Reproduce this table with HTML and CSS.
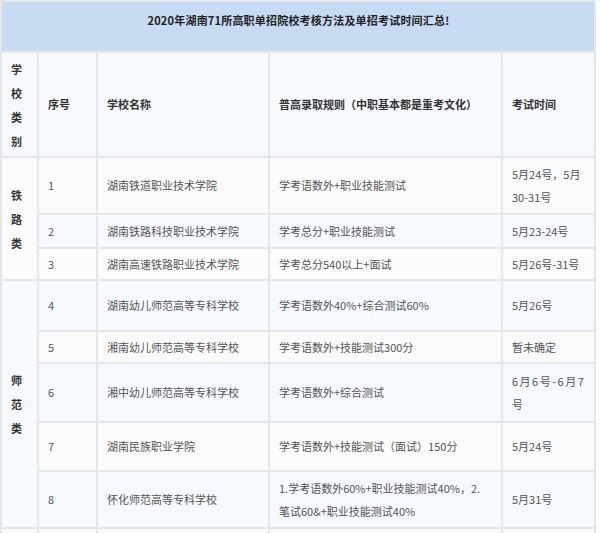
FILE: index.html
```html
<!DOCTYPE html>
<html lang="zh-CN">
<head>
<meta charset="utf-8">
<title>2020年湖南71所高职单招院校考核方法及单招考试时间汇总</title>
<link rel="stylesheet" href="styles.css">
</head>
<body>
<table class="sheet">
  <colgroup>
    <col class="c-cat">
    <col class="c-no">
    <col class="c-name">
    <col class="c-rule">
    <col class="c-date">
  </colgroup>
  <tr class="r-title">
    <td class="title" colspan="5">2020年湖南71所高职单招院校考核方法及单招考试时间汇总!</td>
  </tr>
  <tr class="r-head blue">
    <td class="cat">学校类别</td>
    <td class="head">序号</td>
    <td class="head">学校名称</td>
    <td class="head">普高录取规则（中职基本都是重考文化）</td>
    <td class="head">考试时间</td>
  </tr>
  <tr class="r1 white">
    <td class="cat" rowspan="3">铁路类</td>
    <td>1</td>
    <td>湖南铁道职业技术学院</td>
    <td>学考语数外+职业技能测试</td>
    <td>5月24号，5月<br>30-31号</td>
  </tr>
  <tr class="r2 blue">
    <td>2</td>
    <td>湖南铁路科技职业技术学院</td>
    <td>学考总分+职业技能测试</td>
    <td>5月23-24号</td>
  </tr>
  <tr class="r3 white">
    <td>3</td>
    <td>湖南高速铁路职业技术学院</td>
    <td>学考总分540以上+面试</td>
    <td>5月26号-31号</td>
  </tr>
  <tr class="r4 blue">
    <td class="cat" rowspan="5">师范类</td>
    <td>4</td>
    <td>湖南幼儿师范高等专科学校</td>
    <td>学考语数外40%+综合测试60%</td>
    <td>5月26号</td>
  </tr>
  <tr class="r5 white">
    <td>5</td>
    <td>湘南幼儿师范高等专科学校</td>
    <td>学考语数外+技能测试300分</td>
    <td>暂未确定</td>
  </tr>
  <tr class="r6 blue">
    <td>6</td>
    <td>湘中幼儿师范高等专科学校</td>
    <td>学考语数外+综合测试</td>
    <td class="spaced">6月6号-6月7<br>号</td>
  </tr>
  <tr class="r7 white">
    <td>7</td>
    <td>湖南民族职业学院</td>
    <td>学考语数外+技能测试（面试）150分</td>
    <td>5月24号</td>
  </tr>
  <tr class="r8 blue">
    <td>8</td>
    <td>怀化师范高等专科学校</td>
    <td>1.学考语数外60%+职业技能测试40%，2.<br>笔试60&amp;+职业技能测试40%</td>
    <td>5月31号</td>
  </tr>
  <tr class="r9 white">
    <td class="cat"></td>
    <td></td>
    <td></td>
    <td></td>
    <td></td>
  </tr>
</table>
</body>
</html>
```

FILE: styles.css
```css
html, body {
  margin: 0;
  padding: 0;
  background: #ffffff;
}

body {
  font-family: "Noto Sans CJK SC", "Noto Sans", sans-serif;
  font-size: 11px;
  color: #555555;
}

.sheet {
  width: 595px;
  table-layout: fixed;
  border-collapse: collapse;
}

.c-cat { width: 37px; }
.c-no { width: 59px; }
.c-name { width: 172px; }
.c-rule { width: 233px; }
.c-date { width: 93px; }

.sheet td {
  border: 2px solid #e4e6e9;
  padding: 0 8px 0 9px;
  line-height: 23px;
  vertical-align: middle;
  text-align: left;
  word-break: break-all;
}

.white td { background: #fbfbfb; }
.blue td { background: #f6f9fe; }

.title {
  background: #c7dbf3;
  color: #222222;
  font-weight: bold;
  text-align: center !important;
  vertical-align: top !important;
  padding-top: 7px !important;
  font-size: 11px;
  letter-spacing: 0.2px;
}

.head {
  color: #333333;
  font-weight: bold;
}

.sheet td.cat {
  color: #333333;
  font-weight: bold;
  line-height: 24px;
  padding: 0 9px;
}

.spaced { letter-spacing: 1.5px; }

.r-title { height: 51px; }
.r-head { height: 105px; }
.r1 { height: 57px; }
.r2 { height: 34px; }
.r3 { height: 32px; }
.r4 { height: 51px; }
.r5 { height: 32px; }
.r6 { height: 59px; }
.r7 { height: 49px; }
.r8 { height: 57px; }
.r9 { height: 40px; }
```
